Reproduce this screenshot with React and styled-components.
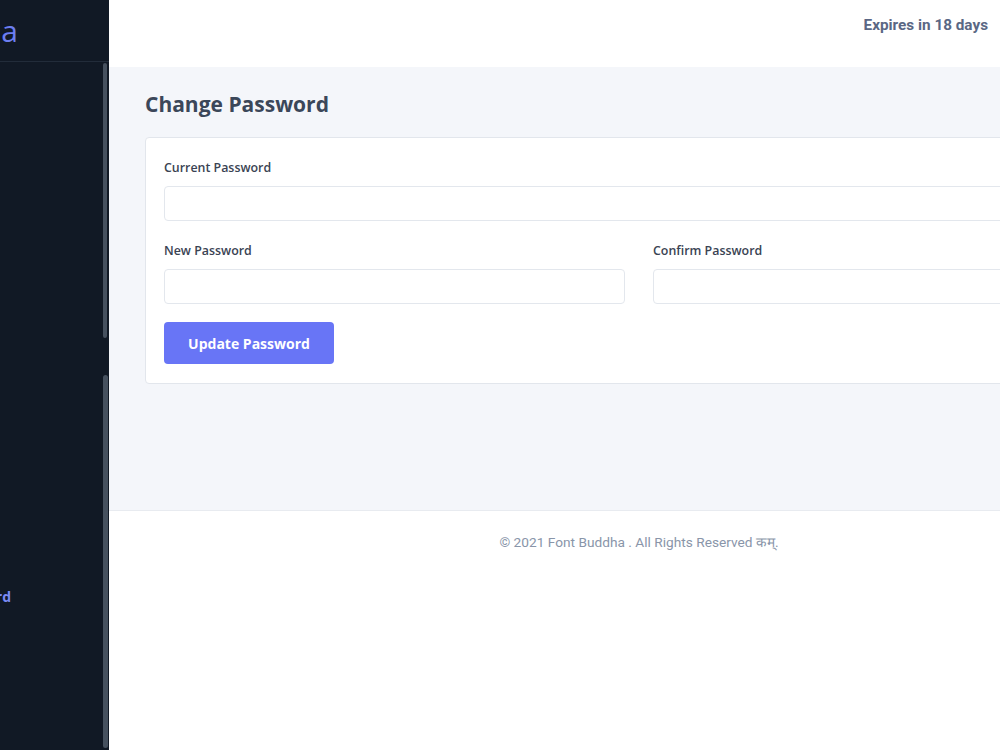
import React from "react";
import styled, { createGlobalStyle } from "styled-components";

const Global = createGlobalStyle`
  html, body { margin: 0; padding: 0; overflow: hidden; }
  body { font-family: "Open Sans", "Noto Sans", sans-serif; background: #ffffff; }
  * { box-sizing: border-box; }
`;

const Shell = styled.div`
  display: flex;
  width: 1169px;
  height: 750px;
`;

const Sidebar = styled.aside`
  position: relative;
  flex: 0 0 109px;
  width: 109px;
  height: 750px;
  background: #111925;
  overflow: hidden;
  display: flex;
  flex-direction: column;
`;

const ClipRow = styled.div`
  display: flex;
  justify-content: flex-end;
  align-items: center;
  overflow: hidden;
  white-space: nowrap;
  padding-right: ${(p) => p.$right}px;
  height: ${(p) => p.$h}px;
`;

const Brand = styled(ClipRow)`
  border-bottom: 1px solid #222c3a;
  font-family: "Open Sans", sans-serif;
  font-size: 30px;
  font-weight: 400;
  color: #6c7ef2;
  flex-shrink: 0;
`;

const Nav = styled.nav`
  display: flex;
  flex-direction: column;
  padding-top: ${(p) => p.$top}px;
`;

const NavItem = styled(ClipRow)`
  font-family: "Open Sans", sans-serif;
  font-size: 14px;
  font-weight: 700;
  color: ${(p) => (p.$active ? "#7b8bf6" : "#9aa5b8")};
`;

const Thumb = styled.div`
  position: absolute;
  left: 103px;
  width: ${(p) => p.$w}px;
  top: ${(p) => p.$top}px;
  height: ${(p) => p.$h}px;
  background: #46515f;
  border-radius: 3px;
`;

const Main = styled.div`
  flex: 0 0 1060px;
  width: 1060px;
  display: flex;
  flex-direction: column;
`;

const Header = styled.header`
  height: 67px;
  width: 891px;
  background: #ffffff;
  display: flex;
  align-items: flex-start;
  justify-content: flex-end;
  padding: 15px 12px 0 0;
  font-family: Roboto, "Liberation Sans", sans-serif;
  font-size: 15.3px;
  line-height: 20px;
  font-weight: 700;
  color: #5a6784;
`;

const Content = styled.main`
  height: 443px;
  background: #f4f6fa;
  padding: 23px 36px 0 36px;
`;

const Title = styled.h1`
  margin: 0 0 19px 0;
  font-family: "Open Sans", sans-serif;
  font-size: 21px;
  line-height: 28px;
  font-weight: 700;
  color: #3b4759;
`;

const Card = styled.section`
  background: #ffffff;
  border: 1px solid #e2e6ec;
  border-radius: 4px;
  padding: 19px 18px;
  display: flex;
  flex-direction: column;
`;

const Row = styled.div`
  display: grid;
  grid-template-columns: ${(p) => (p.$cols === 2 ? "1fr 1fr" : "1fr")};
  column-gap: 28px;
  margin-bottom: ${(p) => p.$mb}px;
`;

const Field = styled.div`
  display: flex;
  flex-direction: column;
`;

const Label = styled.label`
  font-family: "Open Sans", sans-serif;
  font-size: 12.4px;
  line-height: 20px;
  font-weight: 600;
  color: #3a4353;
  padding-top: 1px;
  margin-bottom: 8px;
`;

const Input = styled.input`
  height: 35px;
  border: 1px solid #e3e7ed;
  border-radius: 4px;
  background: #ffffff;
  padding: 0 12px;
  font-size: 14px;
  outline: none;
`;

const Button = styled.button`
  align-self: flex-start;
  width: 170px;
  height: 42px;
  border: none;
  border-radius: 4px;
  background: #6875f6;
  color: #ffffff;
  font-family: "Open Sans", sans-serif;
  font-size: 14px;
  font-weight: 700;
  cursor: pointer;
`;

const Footer = styled.footer`
  flex: 1;
  background: #ffffff;
  border-top: 1px solid #e8ebf0;
  text-align: center;
  padding-top: 21px;
  font-family: Roboto, "Liberation Sans", sans-serif;
  font-size: 13.7px;
  line-height: 20px;
  color: #8995a9;
`;

export default function App() {
  return (
    <>
      <Global />
      <Shell>
        <Sidebar>
          <Brand $right={91} $h={62}>Font Buddha</Brand>
          <Nav $top={514}>
            <NavItem $right={98} $h={40} $active>
              Change Password
            </NavItem>
          </Nav>
          <Thumb $top={63} $h={275} $w={4} />
          <Thumb $top={375} $h={373} $w={5} />
        </Sidebar>
        <Main>
          <Header>Expires in 18 days</Header>
          <Content>
            <Title>Change Password</Title>
            <Card>
              <Row $mb={19}>
                <Field>
                  <Label>Current Password</Label>
                  <Input type="password" />
                </Field>
              </Row>
              <Row $cols={2} $mb={18}>
                <Field>
                  <Label>New Password</Label>
                  <Input type="password" />
                </Field>
                <Field>
                  <Label>Confirm Password</Label>
                  <Input type="password" />
                </Field>
              </Row>
              <Button>Update Password</Button>
            </Card>
          </Content>
          <Footer>© 2021 Font Buddha . All Rights Reserved कम्.</Footer>
        </Main>
      </Shell>
    </>
  );
}
